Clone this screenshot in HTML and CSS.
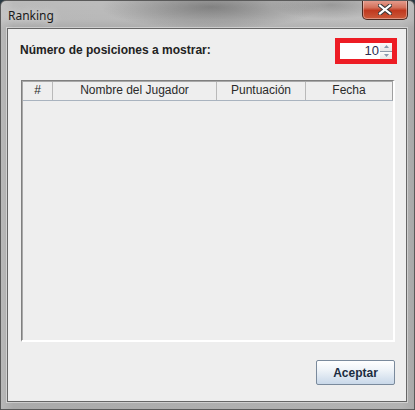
FILE: index.html
```html
<!DOCTYPE html>
<html lang="es">
<head>
<meta charset="utf-8">
<title>Ranking</title>
<link rel="stylesheet" href="styles.css">
</head>
<body>
<div class="window">
  <div class="titlebar">
    <span class="title">Ranking</span>
    <button class="close" aria-label="Cerrar">
      <svg width="14" height="11" viewBox="0 0 14 11">
        <path d="M2 1.5 L12 9.5 M12 1.5 L2 9.5" stroke="#3a3a3a" stroke-width="4.2" stroke-linecap="square"/>
        <path d="M2 1.5 L12 9.5 M12 1.5 L2 9.5" stroke="#ffffff" stroke-width="2.2" stroke-linecap="square"/>
      </svg>
    </button>
  </div>
  <div class="client">
    <div class="toprow">
      <span class="label">Número de posiciones a mostrar:</span>
      <div class="spinner">
        <div class="field">10</div>
        <div class="arrows">
          <div class="arrow up"><svg width="5" height="3" viewBox="0 0 5 3"><path d="M2.5 0 L5 3 L0 3Z" fill="#8a9aae"/></svg></div>
          <div class="arrow down"><svg width="5" height="3" viewBox="0 0 5 3"><path d="M0 0 L5 0 L2.5 3Z" fill="#8a9aae"/></svg></div>
        </div>
      </div>
    </div>
    <div class="scrollpane">
      <div class="thead">
        <div class="th c1">#</div>
        <div class="th c2">Nombre del Jugador</div>
        <div class="th c3">Puntuación</div>
        <div class="th c4">Fecha</div>
      </div>
    </div>
    <div class="buttons">
      <button class="btn">Aceptar</button>
    </div>
  </div>
</div>
</body>
</html>
```
FILE: styles.css
```css
html, body {
  margin: 0;
  padding: 0;
  background: #2a3a44;
}
.window {
  width: 415px;
  height: 410px;
  box-sizing: border-box;
  border-radius: 6px 6px 0 0;
  background:
    radial-gradient(ellipse 110px 22px at 210px 6px, rgba(40,40,40,0.55), rgba(40,40,40,0) 100%),
    radial-gradient(ellipse 60px 14px at 330px 4px, rgba(40,40,40,0.35), rgba(40,40,40,0) 100%),
    linear-gradient(90deg, #b9b9b9 0%, #aaaaaa 3%, #b3b3b3 97%, #a9a9a9 100%);
  border: 1px solid #5a5a5a;
  display: flex;
  flex-direction: column;
  overflow: hidden;
}
.titlebar {
  height: 28px;
  display: flex;
  align-items: flex-start;
  background: linear-gradient(180deg, rgba(255,255,255,0.2), rgba(255,255,255,0.15) 70%, rgba(255,255,255,0));
}
.title {
  font-family: "Noto Sans", "Liberation Sans", sans-serif;
  font-size: 12px;
  color: #1a1a1a;
  margin: 6px 0 0 7px;
  text-shadow: 0 0 8px rgba(255,255,255,0.9);
}
.close {
  margin: -1px 6px 0 auto;
  width: 46px;
  height: 20px;
  padding: 0;
  border: 1px solid #4a2a22;
  border-top: none;
  border-radius: 0 0 5px 5px;
  background: linear-gradient(180deg, #e7a294 0%, #d3705a 40%, #c0391f 55%, #cc5a3a 100%);
  box-shadow: inset 0 0 0 1px rgba(255,255,255,0.35);
  display: flex;
  align-items: center;
  justify-content: center;
}
.client {
  margin: 0 7px 7px 6px;
  flex: 1;
  border: 1px solid #666666;
  background: #eeeeee;
  display: flex;
  flex-direction: column;
  padding: 9px 11px 16px 12px;
  box-shadow: 0 0 0 1px rgba(255,255,255,0.4);
}
.toprow {
  display: flex;
  align-items: center;
  justify-content: space-between;
  height: 26px;
}
.label {
  font-family: "Liberation Sans", Arial, sans-serif;
  font-weight: bold;
  font-size: 12px;
  color: #222222;
  margin-top: -3px;
}
.spinner {
  width: 62px;
  height: 26px;
  box-sizing: border-box;
  border: 5px solid #ed1c24;
  display: flex;
  margin-right: -2px;
  background: #ffffff;
}
.field {
  flex: 1;
  font-family: "Liberation Sans", Arial, sans-serif;
  font-size: 13px;
  color: #2c2c50;
  text-align: right;
  line-height: 16px;
  padding-right: 1px;
}
.arrows {
  width: 12px;
  display: flex;
  flex-direction: column;
  background: #f2f2f2;
}
.arrow {
  flex: 1;
  display: flex;
  align-items: center;
  justify-content: center;
  background: linear-gradient(180deg, #fbfbfb, #e6e6e6);
}
.arrow.up {
  border-bottom: 1px solid #8e9aaa;
}
.scrollpane {
  margin-top: 16px;
  height: 262px;
  box-sizing: border-box;
  margin-left: 1px;
  border-top: 1px solid #7f7f7f;
  border-left: 1px solid #7f7f7f;
  border-right: 2px solid #ffffff;
  border-bottom: 2px solid #ffffff;
  box-shadow: inset 1px 1px 0 #a8a8a8;
  background: #eeeeee;
}
.thead {
  display: flex;
  height: 19px;
  margin-left: 1px;
  margin-top: 1px;
  border-bottom: 1px solid #a9b3bf;
  border-right: 1px solid #a0a0a0;
  box-sizing: border-box;
}
.th {
  font-family: "Liberation Sans", Arial, sans-serif;
  font-size: 12px;
  color: #2a2a2a;
  text-align: center;
  line-height: 17px;
  box-sizing: border-box;
  border-right: 1px solid #b9b9b9;
}
.th.c4 { border-right: none; }
.c1 { width: 30px; }
.c2 { width: 164px; }
.c3 { width: 89px; }
.c4 { flex: 1; }
.buttons {
  margin-top: 18px;
  display: flex;
  justify-content: flex-end;
}
.btn {
  width: 79px;
  height: 25px;
  border: 1px solid #7a8a9c;
  border-radius: 2px;
  background: linear-gradient(180deg, #ffffff 0%, #eef3f8 40%, #c9d8e9 100%);
  font-family: "Liberation Sans", Arial, sans-serif;
  font-weight: bold;
  font-size: 12px;
  color: #1c2c40;
  padding: 0;
}
```
